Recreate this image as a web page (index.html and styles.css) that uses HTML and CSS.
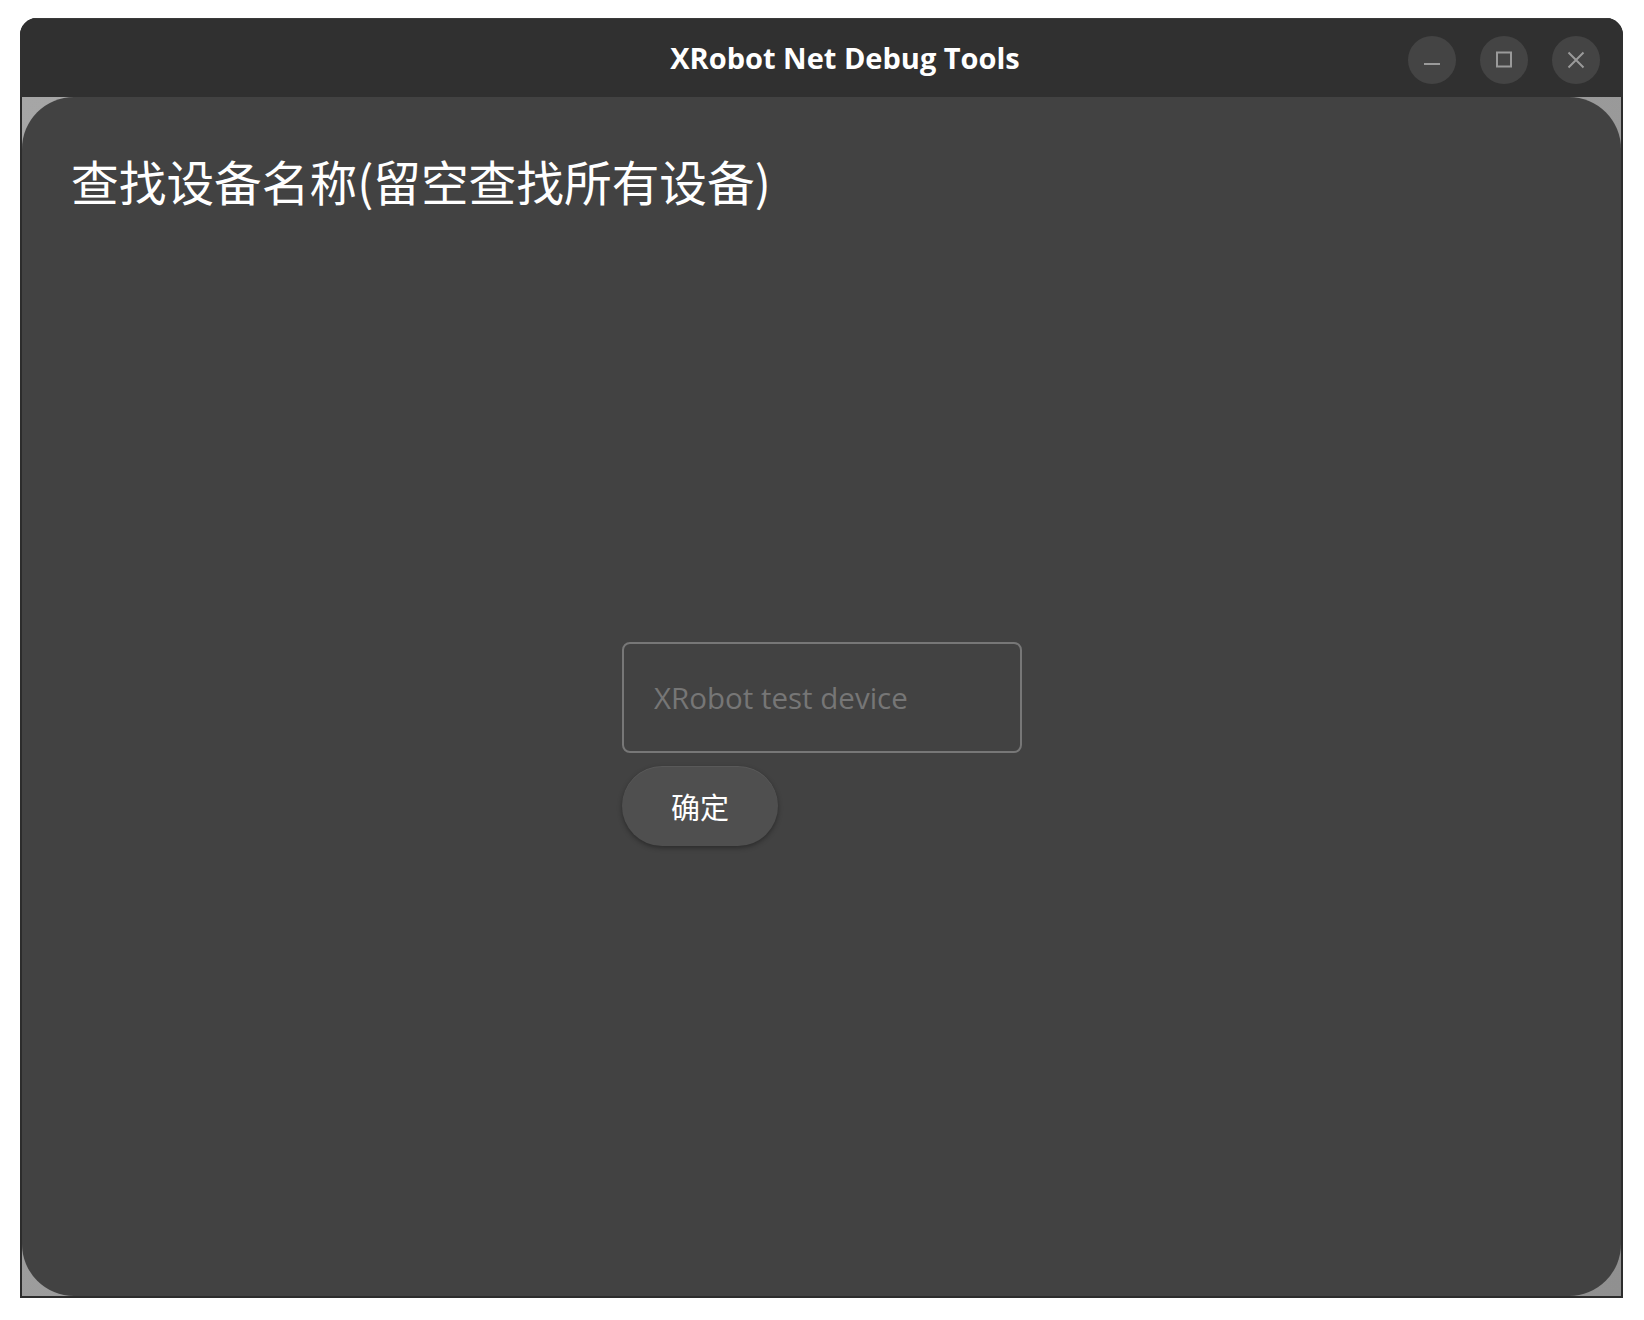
FILE: index.html
```html
<!DOCTYPE html>
<html lang="zh">
<head>
<meta charset="utf-8">
<title>XRobot Net Debug Tools</title>
<link rel="stylesheet" href="styles.css">
</head>
<body>
<div class="window">
  <header class="titlebar">
    <div class="title">XRobot Net Debug Tools</div>
    <div class="controls">
      <button class="ctl" aria-label="minimize">
        <svg width="18" height="18" viewBox="0 0 18 18"><line x1="1" y1="13" x2="17" y2="13" stroke="#9a9a9a" stroke-width="2"/></svg>
      </button>
      <button class="ctl" aria-label="maximize">
        <svg width="18" height="18" viewBox="0 0 18 18"><rect x="2" y="1.5" width="14" height="14" fill="none" stroke="#9a9a9a" stroke-width="2"/></svg>
      </button>
      <button class="ctl" aria-label="close">
        <svg width="18" height="18" viewBox="0 0 18 18"><path d="M1.5 1.5 L16.5 16.5 M16.5 1.5 L1.5 16.5" stroke="#9a9a9a" stroke-width="2" fill="none"/></svg>
      </button>
    </div>
  </header>
  <div class="frame">
    <main class="panel">
      <h1 class="heading">查找设备名称(留空查找所有设备)</h1>
      <div class="form">
        <input class="field" type="text" placeholder="XRobot test device">
        <button class="ok">确定</button>
      </div>
    </main>
  </div>
</div>
</body>
</html>
```

FILE: styles.css
```css
html, body {
  margin: 0;
  padding: 0;
  background: #ffffff;
}
body {
  padding: 18px 21px 22px 20px;
  font-family: "Open Sans", "Noto Sans CJK SC", sans-serif;
}
.window {
  width: 1603px;
  height: 1280px;
  display: flex;
  flex-direction: column;
  background: #2e2e2e;
  border-radius: 17px 17px 0 0;
  overflow: hidden;
  box-sizing: border-box;
}
.titlebar {
  height: 79px;
  flex: none;
  display: flex;
  align-items: center;
  background: #303030;
  border-top: 1px solid #3a3a3a;
  box-sizing: border-box;
}
.title {
  flex: 1;
  text-align: center;
  padding-left: 262px;
  padding-bottom: 2px;
  color: #ffffff;
  font-family: "Open Sans", sans-serif;
  font-weight: 700;
  font-size: 29px;
  letter-spacing: 0;
}
.controls {
  display: flex;
  gap: 24px;
  padding-right: 23px;
  padding-top: 4px;
}
.ctl {
  width: 48px;
  height: 48px;
  border-radius: 50%;
  border: none;
  background: #444444;
  padding: 0;
  display: flex;
  align-items: center;
  justify-content: center;
}
.frame {
  flex: 1;
  display: flex;
  background: linear-gradient(135deg, #a6a6a6, #909090);
  border: 2px solid #2c2c2c;
  border-top: none;
}
.panel {
  flex: 1;
  background: #424242;
  border-radius: 52px;
  display: flex;
  flex-direction: column;
  padding: 60px 0 0 49px;
}
.heading {
  margin: 0;
  font-family: "Noto Sans CJK SC", sans-serif;
  font-weight: 400;
  font-size: 47.7px;
  line-height: 1;
  color: #ffffff;
}
.form {
  display: flex;
  flex-direction: column;
  align-items: flex-start;
  gap: 13px;
  margin-top: 437px;
  margin-left: 551px;
}
.field {
  width: 400px;
  height: 111px;
  box-sizing: border-box;
  border: 2px solid #777777;
  border-radius: 8px;
  background: transparent;
  padding: 0 30px;
  font-family: "Open Sans", sans-serif;
  font-size: 29.5px;
  color: #dddddd;
  outline: none;
}
.field::placeholder {
  color: #767676;
}
.ok {
  width: 156px;
  height: 80px;
  border: none;
  border-radius: 40px;
  background: #4f4f4f;
  box-shadow: 0 2px 5px rgba(0,0,0,0.35), inset 0 1px 0 rgba(255,255,255,0.06);
  color: #ffffff;
  font-family: "Noto Sans CJK SC", sans-serif;
  font-size: 29px;
  padding: 0;
}
```
